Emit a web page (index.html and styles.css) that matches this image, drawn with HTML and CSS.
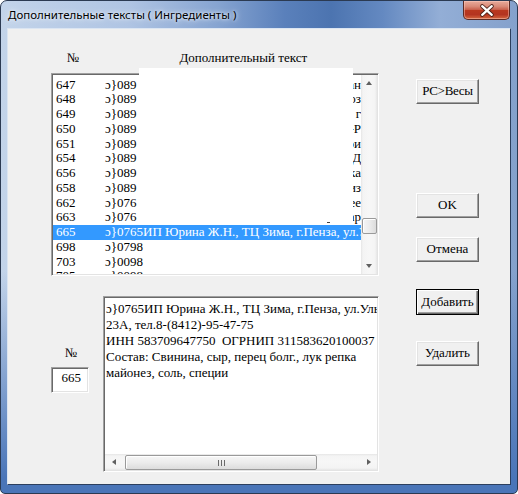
FILE: index.html
```html
<!DOCTYPE html>
<html lang="ru">
<head>
<meta charset="utf-8">
<title>Дополнительные тексты</title>
<link rel="stylesheet" href="styles.css">
</head>
<body>
<div class="window">
  <div class="titlebar">
    <span class="title">Дополнительные тексты ( Ингредиенты )</span>
    <div class="close">
      <svg width="47" height="19" viewBox="0 0 47 19">
        <path d="M19 5 L29 14 M29 5 L19 14" stroke="#4a2018" stroke-width="4.2" stroke-linecap="round" fill="none"/>
        <path d="M19 5 L29 14 M29 5 L19 14" stroke="#ffffff" stroke-width="2.4" stroke-linecap="round" fill="none"/>
      </svg>
    </div>
  </div>
  <div class="client">
    <div class="main">
      <div class="headers">
        <span class="h-num">№</span>
        <span class="h-text">Дополнительный текст</span>
      </div>
      <div class="listbox sunken">
        <div class="rows">
          <div class="row"><span class="num">647</span><span class="txt">ɔ}089</span><span class="tail">ан</span></div>
          <div class="row"><span class="num">648</span><span class="txt">ɔ}089</span><span class="tail">оз</span></div>
          <div class="row"><span class="num">649</span><span class="txt">ɔ}089</span><span class="tail">ан г</span></div>
          <div class="row"><span class="num">650</span><span class="txt">ɔ}089</span><span class="tail">а-Р</span></div>
          <div class="row"><span class="num">651</span><span class="txt">ɔ}089</span><span class="tail">ри</span></div>
          <div class="row"><span class="num">654</span><span class="txt">ɔ}089</span><span class="tail">»Д</span></div>
          <div class="row"><span class="num">656</span><span class="txt">ɔ}089</span><span class="tail">ка</span></div>
          <div class="row"><span class="num">658</span><span class="txt">ɔ}089</span><span class="tail">низ</span></div>
          <div class="row"><span class="num">662</span><span class="txt">ɔ}076</span><span class="tail">еее</span></div>
          <div class="row"><span class="num">663</span><span class="txt">ɔ}076</span><span class="tail">ар</span></div>
          <div class="row selected"><span class="num">665</span><span class="txt long">ɔ}0765ИП Юрина Ж.Н., ТЦ Зима, г.Пенза, ул.Ул</span></div>
          <div class="row"><span class="num">698</span><span class="txt">ɔ}0798</span></div>
          <div class="row"><span class="num">703</span><span class="txt">ɔ}0098</span></div>
          <div class="row"><span class="num">705</span><span class="txt">ɔ}0098</span></div>
        </div>
        <div class="vscroll">
          <div class="vbtn"><span class="tri-up"></span></div>
          <div class="vtrack"><div class="vthumb"></div></div>
          <div class="vbtn"><span class="tri-down"></span></div>
        </div>
      </div>
      <div class="bottom">
        <div class="numcol">
          <span class="numlabel">№</span>
          <div class="numbox sunken">665</div>
        </div>
        <div class="memo sunken">
          <div class="memo-text">
            <div class="line">ɔ}0765ИП Юрина Ж.Н., ТЦ Зима, г.Пенза, ул.Ульяновская</div>
            <div class="line">23А, тел.8-(8412)-95-47-75</div>
            <div class="line">ИНН 583709647750&nbsp; ОГРНИП 311583620100037</div>
            <div class="line">Состав: Свинина, сыр, перец болг., лук репка</div>
            <div class="line">майонез, соль, специи</div>
          </div>
          <div class="hscroll">
            <div class="hbtn"><span class="tri-left"></span></div>
            <div class="htrack"><div class="hthumb"><span class="grip"></span></div></div>
            <div class="hbtn"><span class="tri-right"></span></div>
          </div>
        </div>
      </div>
      <div class="overlay"></div>
    </div>
    <div class="buttons">
      <div class="btn b-pc">PC&gt;Весы</div>
      <div class="btn b-ok">OK</div>
      <div class="btn b-cancel">Отмена</div>
      <div class="btn b-add default">Добавить</div>
      <div class="btn b-del">Удалить</div>
    </div>
  </div>
</div>
</body>
</html>
```
FILE: styles.css
```css
* { box-sizing: border-box; }
html, body { margin: 0; padding: 0; }
body { width: 518px; height: 494px; overflow: hidden; background: #ffffff; }

.window {
  width: 518px;
  height: 494px;
  border: 1px solid #2b3a52;
  border-radius: 7px 7px 5px 5px;
  display: flex;
  flex-direction: column;
  background:
    linear-gradient(to bottom, rgba(74,117,184,0) 0%, rgba(74,117,184,0) 55%, rgba(74,117,184,1) 97%),
    linear-gradient(to right, #c3d4ea 0%, #afc4e3 25%, #86a4d1 42%, #5a80bb 55%, #4c74b0 64%, #6489c1 74%, #93aed6 85%, #84a1cc 100%);
  overflow: hidden;
}

.titlebar {
  height: 27px;
  display: flex;
  align-items: flex-start;
}
.title {
  font-family: "Noto Sans", "DejaVu Sans", sans-serif;
  font-size: 11.5px;
  line-height: 16px;
  color: #000;
  padding: 6px 0 0 7px;
  text-shadow: 0 0 6px #eef3fb, 0 0 3px #eef3fb;
}
.close {
  margin-left: auto;
  margin-right: 7px;
  margin-top: -1px;
  width: 47px;
  height: 20px;
  border: 1px solid #5b2a24;
  border-top-color: #7a3a30;
  border-radius: 0 0 5px 5px;
  background: linear-gradient(to bottom, #e9ab9b 0%, #d98a78 30%, #c9604c 48%, #b9381f 52%, #b43420 75%, #d4673f 100%);
  box-shadow: inset 0 0 0 1px rgba(255,210,200,0.45);
  display: flex;
}
.close svg { display: block; }

.client {
  flex: 1;
  margin: 0 6px 8px 6px;
  border: 1px solid;
  border-color: #dbe5f2 #2c3f5e #2c3f5e #dbe5f2;
  background: #f0f0f0;
  display: flex;
  font-family: "Liberation Serif", "Tinos", "Times New Roman", "DejaVu Serif", serif;
  font-size: 13px;
  color: #000;
}

.main {
  position: relative;
  width: 371px;
  padding-left: 43px;
}

.headers {
  height: 44px;
  padding-top: 21px;
  line-height: 16px;
  display: flex;
}
.h-num { margin-left: 16px; }
.h-text { margin-left: 100px; }

.sunken {
  border: 1px solid;
  border-color: #a0a0a0 #ffffff #ffffff #a0a0a0;
  padding: 1px;
  box-shadow: inset 1px 1px 0 #696969, inset -1px -1px 0 #e3e3e3;
  background: #ffffff;
}

.listbox {
  width: 328px;
  height: 203px;
  display: flex;
}
.rows {
  flex: 1;
  min-width: 0;
  overflow: hidden;
  padding-top: 2.5px;
}
.row {
  height: 14.75px;
  line-height: 14.75px;
  display: flex;
  white-space: nowrap;
  overflow: hidden;
}
.num {
  width: 52px;
  flex: none;
  padding-left: 3px;
}
.txt { flex: none; }
.txt.long { flex: 1; min-width: 0; overflow: hidden; }
.tail { margin-left: auto; }
.row.selected { background: #3399ff; color: #ffffff; }

.vscroll {
  width: 16px;
  flex: none;
  display: flex;
  flex-direction: column;
  background: linear-gradient(to right, #e6e6e6 0, #f4f4f4 2px, #f7f7f7 50%, #f4f4f4 calc(100% - 2px), #e6e6e6 100%);
}
.vbtn {
  height: 16px;
  display: flex;
  align-items: center;
  justify-content: center;
}
.vtrack {
  flex: 1;
  position: relative;
}
.vthumb {
  position: absolute;
  left: 1px;
  right: 0;
  top: 127px;
  height: 16px;
  border: 1px solid #9a9a9a;
  border-radius: 2px;
  background: linear-gradient(to right, #f6f6f6 0%, #ececec 50%, #dcdcdc 100%);
  box-shadow: inset 1px 1px 0 #ffffff;
}
.tri-up {
  width: 0; height: 0;
  border-left: 3.5px solid transparent;
  border-right: 3.5px solid transparent;
  border-bottom: 4px solid #606060;
}
.tri-down {
  width: 0; height: 0;
  border-left: 3.5px solid transparent;
  border-right: 3.5px solid transparent;
  border-top: 4px solid #606060;
}
.tri-left {
  width: 0; height: 0;
  border-top: 3.5px solid transparent;
  border-bottom: 3.5px solid transparent;
  border-right: 4px solid #606060;
}
.tri-right {
  width: 0; height: 0;
  border-top: 3.5px solid transparent;
  border-bottom: 3.5px solid transparent;
  border-left: 4px solid #606060;
}

.bottom {
  margin-top: 20px;
  display: flex;
}
.numcol {
  width: 52px;
  flex: none;
  display: flex;
  flex-direction: column;
}
.numlabel {
  line-height: 16px;
  margin-top: 49px;
  padding-left: 14px;
}
.numbox {
  margin-top: 6px;
  width: 38px;
  height: 26px;
  text-align: right;
  padding: 2px 7px 0 0;
  line-height: 16px;
}
.memo {
  width: 276px;
  height: 176px;
  display: flex;
  flex-direction: column;
}
.memo-text {
  flex: 1;
  overflow: hidden;
  padding: 3px 0 0 1px;
  white-space: nowrap;
}
.line { line-height: 16px; }
.hscroll {
  height: 16px;
  flex: none;
  display: flex;
  background: linear-gradient(to bottom, #e6e6e6 0, #f4f4f4 2px, #f7f7f7 50%, #f4f4f4 calc(100% - 2px), #e6e6e6 100%);
}
.hbtn {
  width: 17px;
  flex: none;
  display: flex;
  align-items: center;
  justify-content: center;
}
.htrack {
  flex: 1;
  position: relative;
}
.hthumb {
  position: absolute;
  top: 1px;
  bottom: 0;
  left: 3px;
  width: 192px;
  border: 1px solid #9a9a9a;
  border-radius: 2px;
  background: linear-gradient(to bottom, #f6f6f6 0%, #ececec 50%, #dcdcdc 100%);
  box-shadow: inset 1px 1px 0 #ffffff;
  display: flex;
  align-items: center;
  justify-content: center;
}
.grip {
  width: 7px;
  height: 6px;
  background: repeating-linear-gradient(to right, #6a6a6a 0, #6a6a6a 1px, transparent 1px, transparent 3px);
}

.overlay {
  position: absolute;
  left: 131px;
  top: 39px;
  width: 214px;
  height: 155px;
  background: #ffffff;
}
.overlay::after {
  content: "";
  position: absolute;
  left: 188px;
  top: 154px;
  width: 3px;
  height: 1px;
  background: #404040;
}

.buttons {
  margin-left: 37px;
  width: 63px;
  display: flex;
  flex-direction: column;
}
.btn {
  width: 63px;
  height: 25px;
  border: 1px solid;
  border-color: #ffffff #696969 #696969 #ffffff;
  box-shadow: inset -1px -1px 0 #a0a0a0, inset 1px 1px 0 #e3e3e3;
  background: #f0f0f0;
  text-align: center;
  line-height: 22px;
  white-space: nowrap;
}
.b-pc { margin-top: 50px; letter-spacing: -0.3px; }
.b-ok { margin-top: 89px; }
.b-cancel { margin-top: 19px; }
.b-add { margin-top: 27px; height: 26px; }
.b-del { margin-top: 26px; }
.btn.default {
  border: 1px solid #000000;
  box-shadow: inset 1px 1px 0 #ffffff, inset -1px -1px 0 #696969, inset -2px -2px 0 #a0a0a0;
  line-height: 23px;
}
```
